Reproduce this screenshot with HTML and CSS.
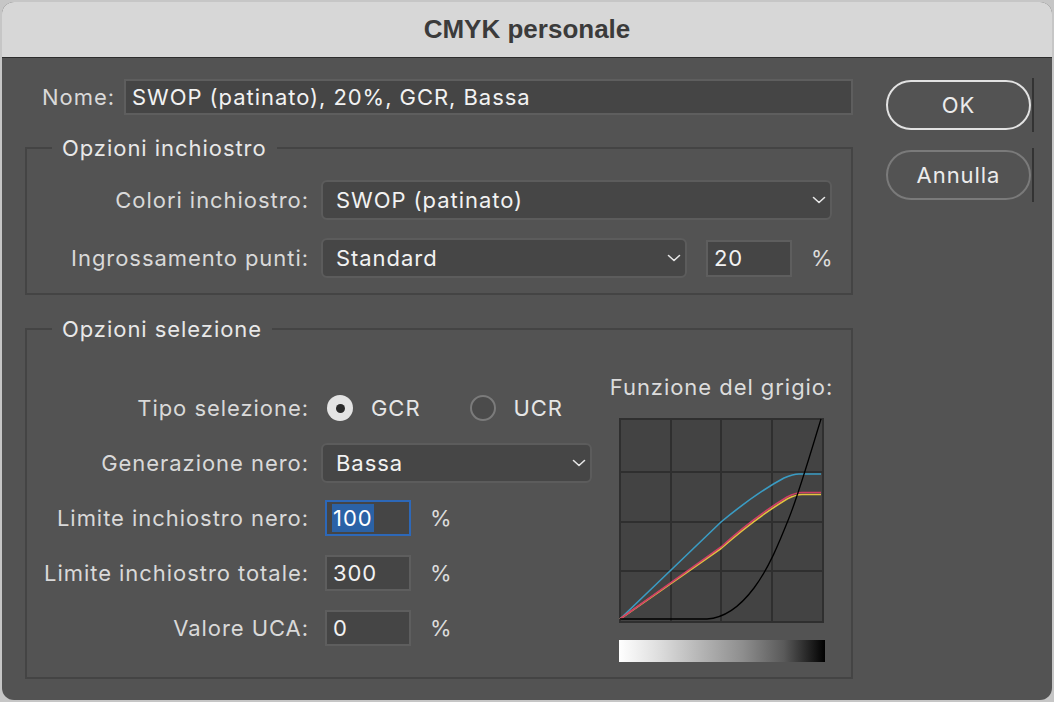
FILE: index.html
```html
<!DOCTYPE html>
<html lang="it">
<head>
<meta charset="utf-8">
<title>CMYK personale</title>
<link rel="stylesheet" href="styles.css">
</head>
<body>
<div class="window">
  <div class="titlebar">CMYK personale</div>
  <div class="content">
    <div class="main">
      <div class="name-row">
        <span class="name-label">Nome:</span>
        <div class="field name-field">SWOP (patinato), 20%, GCR, Bassa</div>
      </div>

      <fieldset class="group ink">
        <legend>Opzioni inchiostro</legend>
        <div class="row">
          <span class="label">Colori inchiostro:</span>
          <div class="select sel-colors"><span>SWOP (patinato)</span>
            <svg class="chev" width="14" height="8" viewBox="0 0 14 8"><path d="M1.5 1.5 L7 6.5 L12.5 1.5" fill="none" stroke="#e6e6e6" stroke-width="1.6" stroke-linecap="round" stroke-linejoin="round"/></svg>
          </div>
        </div>
        <div class="row">
          <span class="label">Ingrossamento punti:</span>
          <div class="select sel-dot"><span>Standard</span>
            <svg class="chev" width="14" height="8" viewBox="0 0 14 8"><path d="M1.5 1.5 L7 6.5 L12.5 1.5" fill="none" stroke="#e6e6e6" stroke-width="1.6" stroke-linecap="round" stroke-linejoin="round"/></svg>
          </div>
          <div class="field num num-dot">20</div>
          <span class="pct">%</span>
        </div>
      </fieldset>

      <fieldset class="group sep">
        <legend>Opzioni selezione</legend>
        <div class="sep-body">
          <div class="sep-left">
            <div class="row">
              <span class="label">Tipo selezione:</span>
              <span class="radio on"></span><span class="radio-text">GCR</span>
              <span class="radio off"></span><span class="radio-text">UCR</span>
            </div>
            <div class="row">
              <span class="label">Generazione nero:</span>
              <div class="select sel-gen"><span>Bassa</span>
                <svg class="chev" width="14" height="8" viewBox="0 0 14 8"><path d="M1.5 1.5 L7 6.5 L12.5 1.5" fill="none" stroke="#e6e6e6" stroke-width="1.6" stroke-linecap="round" stroke-linejoin="round"/></svg>
              </div>
            </div>
            <div class="row">
              <span class="label">Limite inchiostro nero:</span>
              <div class="field num focus"><span class="selected">100</span></div>
              <span class="pct">%</span>
            </div>
            <div class="row">
              <span class="label">Limite inchiostro totale:</span>
              <div class="field num">300</div>
              <span class="pct">%</span>
            </div>
            <div class="row">
              <span class="label">Valore UCA:</span>
              <div class="field num">0</div>
              <span class="pct">%</span>
            </div>
          </div>

          <div class="gray">
            <div class="gray-title">Funzione del grigio:</div>
            <svg class="graph" width="205" height="205" viewBox="0 0 205 205">
              <rect x="0" y="0" width="205" height="205" fill="#434343"/>
              <g stroke="#2f2f2f" stroke-width="2">
                <line x1="52" y1="0" x2="52" y2="205"/>
                <line x1="102" y1="0" x2="102" y2="205"/>
                <line x1="153" y1="0" x2="153" y2="205"/>
                <line x1="0" y1="54" x2="205" y2="54"/>
                <line x1="0" y1="104" x2="205" y2="104"/>
                <line x1="0" y1="153" x2="205" y2="153"/>
              </g>
              <rect x="1" y="1" width="203" height="203" fill="none" stroke="#2f2f2f" stroke-width="2"/>
              <path d="M1 201 L102 104 C125 85 150 68 165 60 C172 57 176 56 180 56 L202 56" fill="none" stroke="#3a9cc4" stroke-width="1.6"/>
              <path d="M1 201 L102 130.5 C125 110 150 92 168 81 C174 78 178 76.5 183 76.5 L202 76.5" fill="none" stroke="#e1c33f" stroke-width="1.6"/>
              <path d="M1 201 L102 129 C125 108 150 90 168 79 C174 76 178 74.5 183 74.5 L202 74.5" fill="none" stroke="#cf3f66" stroke-width="1.6"/>
              <path d="M1 201 L88 201 C105 200 120 190 135 170 C150 150 160 125 170 100 C180 75 193 30 202 1" fill="none" stroke="#000" stroke-width="1.3"/>
            </svg>
            <div class="ramp"></div>
          </div>
        </div>
      </fieldset>
    </div>

    <div class="buttons">
      <div class="btn-wrap"><button class="btn default">OK</button></div>
      <div class="btn-wrap"><button class="btn">Annulla</button></div>
    </div>
  </div>
</div>
</body>
</html>
```
FILE: styles.css
```css
body {
  margin: 0;
  background: #c6c6c6;
  font-family: Inter, "Noto Sans", "Liberation Sans", sans-serif;
  font-size: 22px;
  letter-spacing: 0.95px;
  color: #d9d9d9;
}

.window {
  margin: 2px 0 0 2px;
  width: 1050px;
  height: 698px;
  background: #535353;
  border-radius: 12px;
  overflow: hidden;
}

.titlebar {
  height: 55px;
  background: #d7d7d7;
  border-bottom: 1px solid #2c2c2c;
  display: flex;
  align-items: center;
  justify-content: center;
  font-family: "Liberation Sans", Arial, sans-serif;
  font-weight: bold;
  font-size: 26px;
  letter-spacing: 0;
  color: #3b3b3b;
}

.content {
  display: flex;
  padding-left: 23px;
}

.main {
  width: 828px;
  padding-top: 21px;
}

.name-row {
  display: flex;
  align-items: center;
  height: 36px;
}

.name-label {
  width: 90px;
  text-align: right;
  margin-right: 9px;
  white-space: nowrap;
}

.field {
  box-sizing: border-box;
  border: 2px solid #5e5e5e;
  background: #454545;
  color: #f2f2f2;
  display: flex;
  align-items: center;
}

.name-field {
  flex: 1;
  height: 36px;
  padding-left: 6px;
}

.group {
  margin: 20px 0 0;
  border: 2px solid #444444;
  padding: 19px 0 15px 0;
  min-width: 0;
}

.group legend {
  margin-left: 25px;
  padding: 0 10px;
  font-size: 22px;
  line-height: 26px;
  color: #e8e8e8;
}

.sep {
  margin-top: 21px;
  padding: 0 0 15px 0;
}

.ink .row + .row {
  margin-top: 18px;
}

.row {
  display: flex;
  align-items: center;
  height: 40px;
}

.label {
  width: 282px;
  text-align: right;
  margin-right: 12px;
  white-space: nowrap;
}

.select {
  box-sizing: border-box;
  height: 40px;
  border: 2px solid #5c5c5c;
  border-radius: 6px;
  background: #464646;
  color: #f2f2f2;
  display: flex;
  align-items: center;
  justify-content: space-between;
  padding: 0 4px 0 13px;
}

.sel-colors { width: 511px; }
.sel-dot { width: 366px; }
.sel-gen { width: 271px; }

.num {
  width: 86px;
  height: 36px;
  padding-left: 6px;
}

.num-dot {
  height: 37px;
  margin-left: 19px;
}

.sep-left .num {
  margin-left: 4px;
}

.pct {
  margin-left: 19px;
  color: #dcdcdc;
}

.focus {
  border-color: #2d68b8;
  padding-left: 5px;
}

.selected {
  background: #2b62a6;
  color: #ffffff;
  padding: 1px 1px;
}

.sep-body {
  display: flex;
  justify-content: space-between;
}

.sep-left {
  padding-top: 46px;
  display: flex;
  flex-direction: column;
  gap: 15px;
}

.radio {
  box-sizing: border-box;
  width: 26px;
  height: 26px;
  border-radius: 50%;
  display: flex;
  align-items: center;
  justify-content: center;
}

.radio.on {
  margin-left: 6px;
  background: #e4e4e4;
}

.radio.on::after {
  content: "";
  width: 9px;
  height: 9px;
  border-radius: 50%;
  background: #2b2b2b;
}

.radio.off {
  margin-left: 49px;
  border: 2px solid #7b7b7b;
  background: #4b4b4b;
}

.radio-text {
  margin-left: 18px;
  color: #e6e6e6;
}

.gray {
  width: 205px;
  margin-right: 27px;
  padding-top: 32px;
  display: flex;
  flex-direction: column;
  align-items: center;
}

.gray-title {
  white-space: nowrap;
  line-height: 26px;
  color: #dcdcdc;
}

.graph {
  display: block;
  margin-top: 18px;
}

.ramp {
  margin-top: 17px;
  width: 206px;
  height: 22px;
  background: linear-gradient(to right, #ffffff 0%, #e0e0e0 18%, #b8b8b8 38%, #8e8e8e 60%, #5a5a5a 80%, #000000 100%);
}

.buttons {
  margin-left: 33px;
  padding-top: 20px;
  display: flex;
  flex-direction: column;
  gap: 16px;
}

.btn-wrap {
  padding: 2px 1px 2px 0;
  border-right: 2px solid #333333;
  display: flex;
}

.btn {
  box-sizing: border-box;
  width: 145px;
  height: 50px;
  border-radius: 25px;
  border: 2px solid #7a7a7a;
  background: transparent;
  color: #ececec;
  font-family: Inter, "Noto Sans", "Liberation Sans", sans-serif;
  font-size: 22px;
  letter-spacing: 0.95px;
  padding: 0;
}

.btn.default {
  border-color: #e2e2e2;
}
```
